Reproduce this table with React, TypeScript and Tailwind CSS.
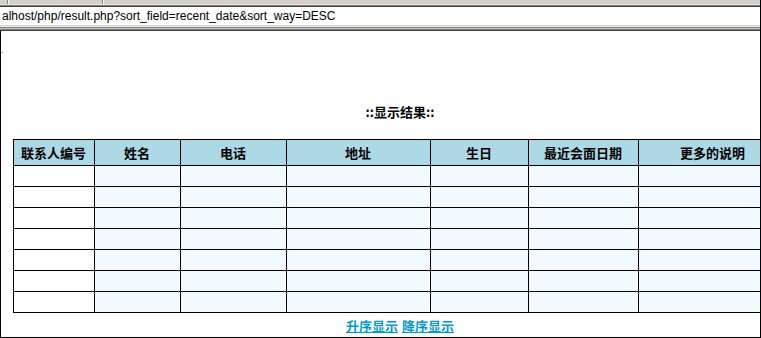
const headers = [
  { label: '联系人编号', w: 'w-[81px]' },
  { label: '姓名', w: 'w-[86px]' },
  { label: '电话', w: 'w-[106px]' },
  { label: '地址', w: 'w-[144px]' },
  { label: '生日', w: 'w-[98px]' },
  { label: '最近会面日期', w: 'w-[110px]' },
  { label: '更多的说明', w: 'w-[149px]' },
];

const rows = [0, 1, 2, 3, 4, 5, 6];

export default function App() {
  return (
    <div className="w-[761px] h-[338px] overflow-hidden bg-white font-['Noto_Sans_CJK_SC',sans-serif]">
      <div className="h-full flex flex-col border-r border-black">
        {/* browser chrome */}
        <div className="flex h-[4px] bg-[#d4d0c8]">
          <div className="w-[7px]" />
          <div className="w-px bg-[#808080]" />
          <div className="w-px bg-white" />
          <div className="w-[93px]" />
          <div className="w-px bg-[#808080]" />
          <div className="w-px bg-white" />
        </div>
        <div className="h-px bg-[#e4e2dc]" />
        <div className="h-px bg-[#808080]" />
        <div className="h-px bg-[#404040]" />
        <div className="h-[18px] flex items-center pl-[2px] text-[12px] text-black font-['Liberation_Sans',sans-serif] whitespace-nowrap">
          alhost/php/result.php?sort_field=recent_date&amp;sort_way=DESC
        </div>
        <div className="h-px bg-[#d4d0c8]" />
        <div className="h-px bg-[#f4f3ee]" />
        <div className="h-px bg-[#808080]" />
        <div className="h-px bg-[#c8c6c0]" />
        <div className="h-px bg-[#808080]" />
        <div className="h-px bg-[#404040]" />

        {/* page */}
        <div className="flex-1 relative border-l border-b border-black overflow-hidden">
          <div className="absolute left-0 top-[21px] w-[2px] h-px bg-[#f0a030]" />
          <div className="w-[798px] flex flex-col items-center pt-[73px]">
            <div className="text-[13px] font-bold leading-[16px] text-black">::显示结果::</div>
            <table className="mt-[19px] w-[774px] table-fixed border-collapse border border-black">
              <thead>
                <tr className="h-[26px] bg-[#add8e6]">
                  {headers.map(h => (
                    <th
                      key={h.label}
                      className={`${h.w} border border-black p-0 text-[13px] font-bold text-black text-center`}
                    >
                      {h.label}
                    </th>
                  ))}
                </tr>
              </thead>
              <tbody>
                {rows.map(r => (
                  <tr key={r} className="h-[21px]">
                    {headers.map((h, i) => (
                      <td
                        key={h.label}
                        className={`border border-black p-0 ${i === 0 ? 'bg-white' : 'bg-[#f0faff]'}`}
                      />
                    ))}
                  </tr>
                ))}
              </tbody>
            </table>
            <div className="mt-[5px] flex gap-[4px] text-[13px] font-bold leading-[16px]">
              <a href="#" className="text-[#0099cc] underline">升序显示</a>
              <a href="#" className="text-[#0099cc] underline">降序显示</a>
            </div>
          </div>
        </div>
      </div>
    </div>
  );
}
